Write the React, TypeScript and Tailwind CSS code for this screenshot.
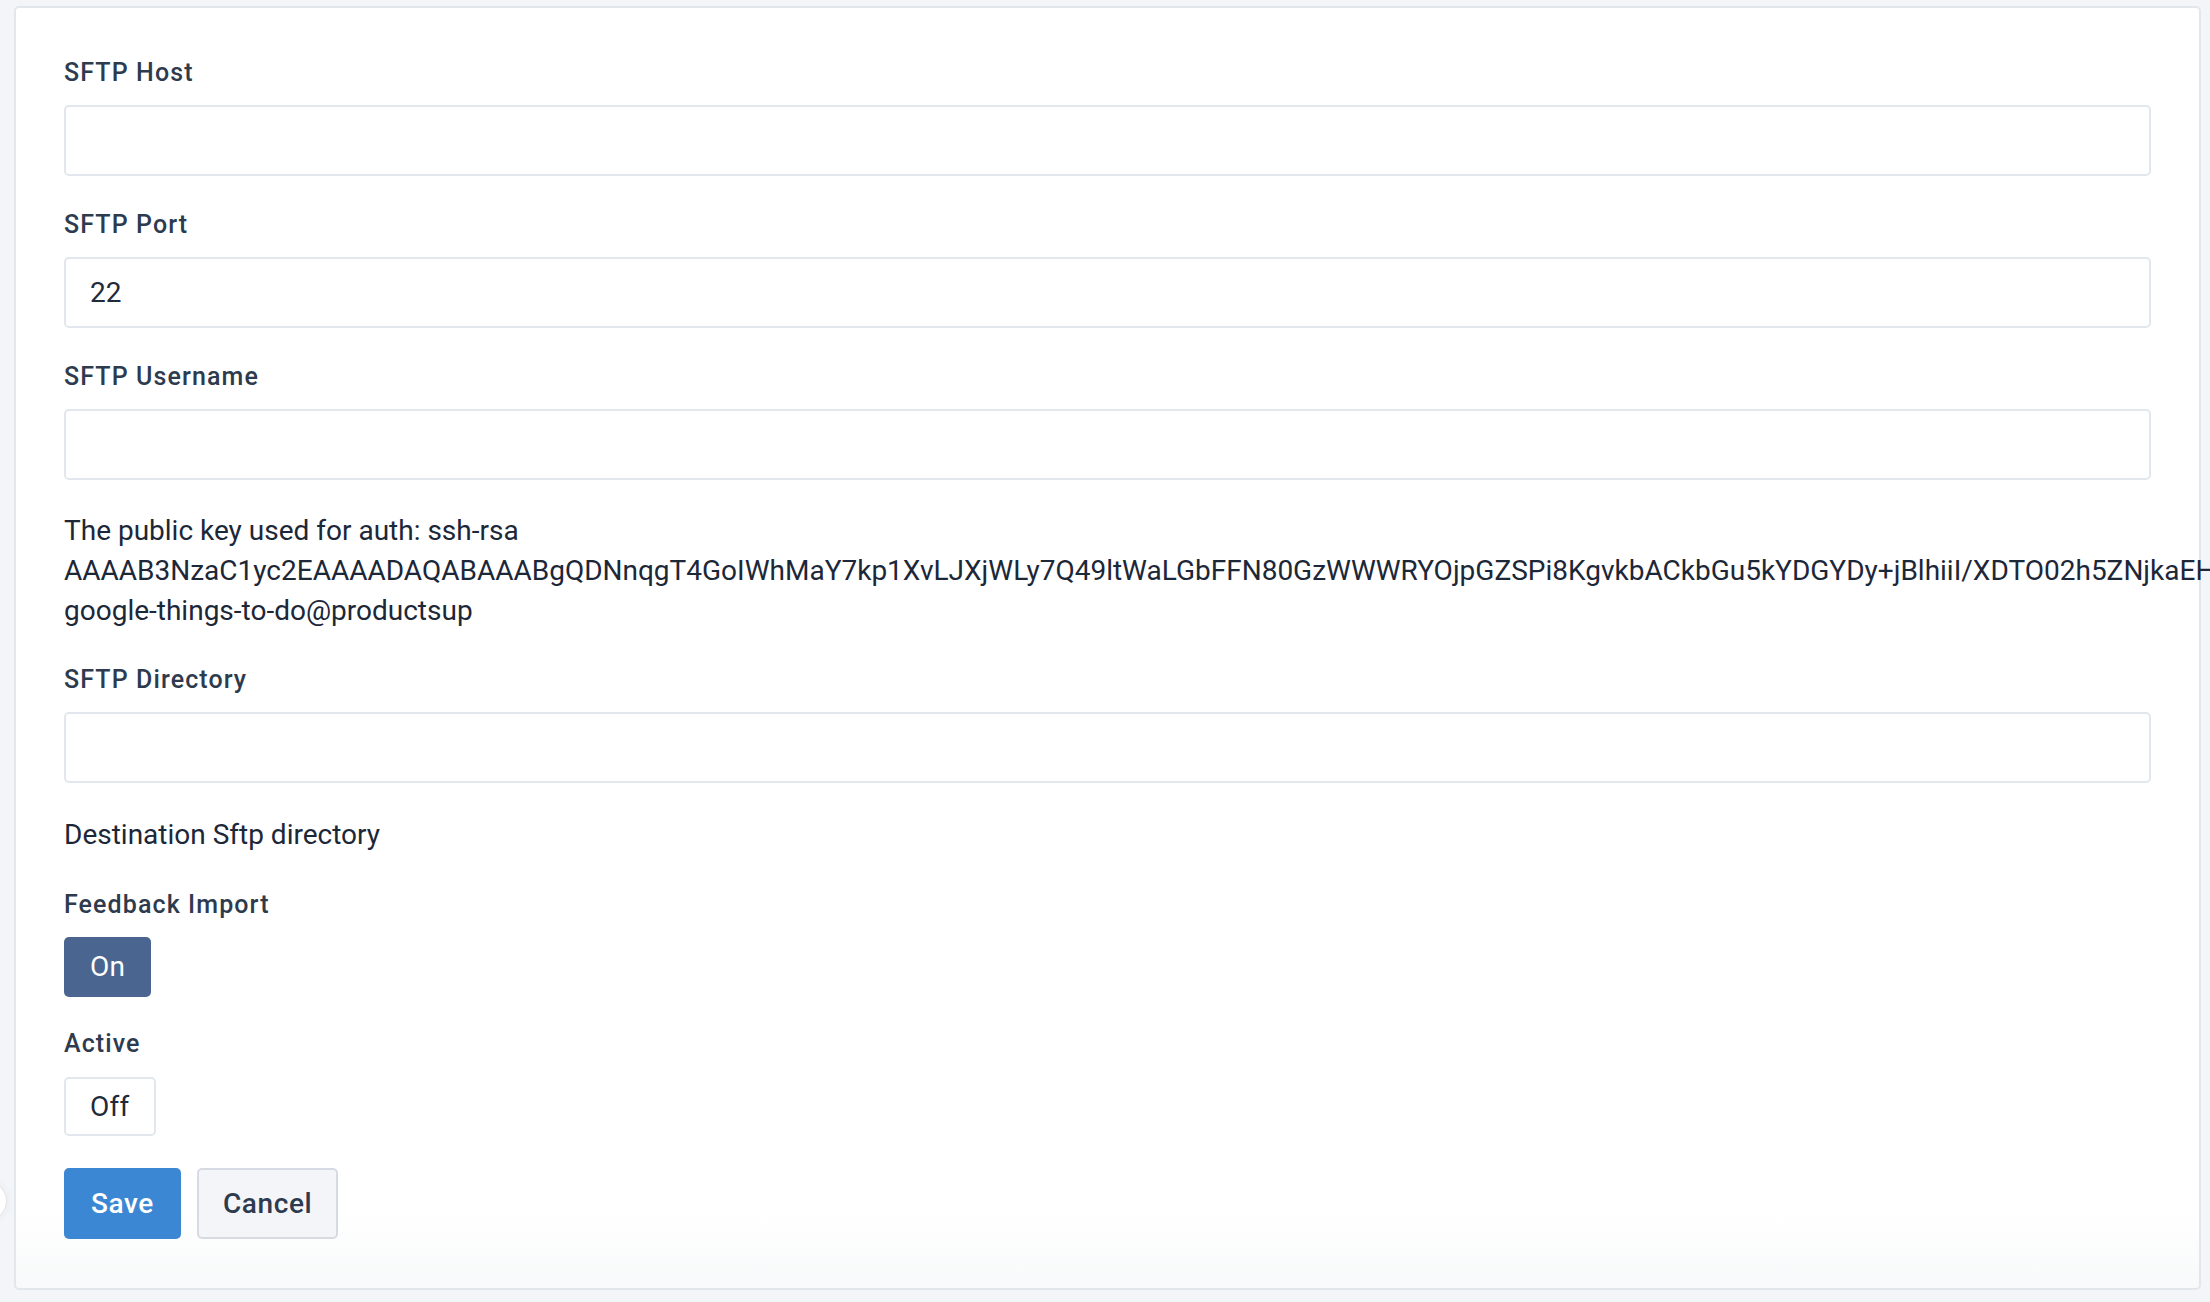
import React from "react";

const KEY =
  "AAAAB3NzaC1yc2EAAAADAQABAAABgQDNnqgT4GoIWhMaY7kp1XvLJXjWLy7Q49ltWaLGbFFN80GzWWWRYOjpGZSPi8KgvkbACkbGu5kYDGYDy+jBlhiiI/XDTO02h5ZNjkaEHq7Lw3pVtR9xKcM2bYfDsU8nJ4oZ";

const font = { fontFamily: "Roboto, 'Noto Sans', sans-serif" };

function Label({ children }: { children: React.ReactNode }) {
  return (
    <label className="block text-[25px] leading-[36px] font-medium tracking-[1.1px] text-[#2e3b4e]">
      {children}
    </label>
  );
}

function TextField({ value = "" }: { value?: string }) {
  return (
    <input
      type="text"
      defaultValue={value}
      className="mt-[14px] block h-[71px] w-full rounded-[5px] border-2 border-[#e2e7ee] bg-white px-[24px] text-[28px] text-[#1f2a3a] outline-none"
      style={font}
    />
  );
}

function Field({ label, value }: { label: string; value?: string }) {
  return (
    <div>
      <Label>{label}</Label>
      <TextField value={value} />
    </div>
  );
}

export default function App() {
  return (
    <div
      className="relative flex h-screen w-full flex-col overflow-hidden bg-[#f4f5f8] pt-[6px] pb-[12px] pl-[14px] pr-[9px]"
      style={font}
    >
      {/* floating sidebar toggle, mostly off-screen */}
      <div className="absolute top-[1182px] left-[-31px] h-[38px] w-[38px] rounded-full border border-[#e3e6eb] bg-white shadow-[0_0_10px_rgba(0,0,0,0.06)]" />

      <div className="flex-1 rounded-[5px] border-2 border-[#e2e7ee] bg-[linear-gradient(to_bottom,#ffffff_94%,#f8f9fa_100%)] px-[48px] pt-[47px]">
        <div className="flex flex-col gap-[31px]">
          <Field label="SFTP Host" />
          <Field label="SFTP Port" value="22" />
          <Field label="SFTP Username" />

          <p className="text-[28px] leading-[40px] text-[#1c2738]">
            The public key used for auth: ssh-rsa {KEY} google-things-to-do@productsup
          </p>

          <Field label="SFTP Directory" />

          <p className="mt-px text-[28px] leading-[40px] text-[#1c2738]">Destination Sftp directory</p>

          <div className="mt-px">
            <Label>Feedback Import</Label>
            <button className="mt-[14px] flex h-[60px] items-center rounded-[5px] bg-[#4a6590] px-[26px] text-[28px] tracking-[0.3px] text-white">
              On
            </button>
          </div>

          <div className="-mt-[2px]">
            <Label>Active</Label>
            <button className="mt-[15px] flex h-[59px] items-center rounded-[5px] border-2 border-[#e2e7ee] bg-white px-[24px] text-[28px] tracking-[0.3px] text-[#1f2a3a]">
              Off
            </button>
          </div>

          <div className="mt-px flex gap-4">
            <button className="h-[71px] rounded-[5px] bg-[#3b87d3] px-[27px] text-[28px] font-medium tracking-[0.6px] text-white">
              Save
            </button>
            <button className="h-[71px] rounded-[5px] border-2 border-[#d6dbe3] bg-[#f4f5f9] px-[24px] text-[28px] font-medium tracking-[0.6px] text-[#2e3b4e]">
              Cancel
            </button>
          </div>
        </div>
      </div>
    </div>
  );
}
